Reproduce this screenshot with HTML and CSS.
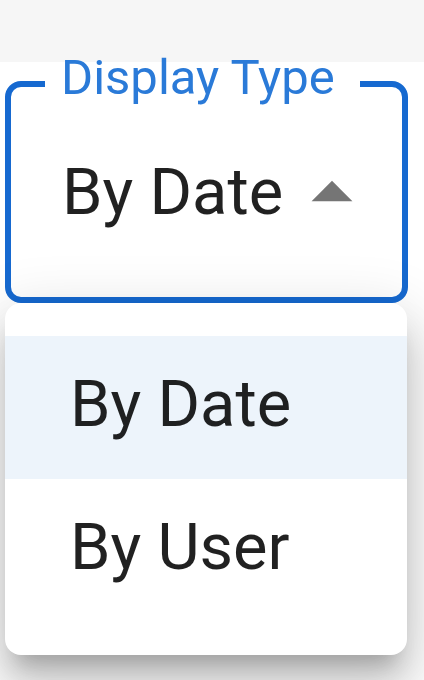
FILE: index.html
```html
<!DOCTYPE html>
<html lang="en">

<head>
    <meta charset="UTF-8">
    <meta name="viewport" content="width=device-width, initial-scale=1.0">
    <title>Display Type</title>
    <link rel="stylesheet" href="styles.css">
</head>

<body>
    <div class="page">
        <fieldset class="select-field">
            <legend class="select-label">Display Type</legend>
            <div class="select-row">
                <span class="select-value">By Date</span>
                <svg class="select-icon" viewBox="0 0 24 24" aria-hidden="true">
                    <path d="M7 14l5-5 5 5z"></path>
                </svg>
            </div>
        </fieldset>

        <ul class="menu">
            <li class="menu-item selected">By Date</li>
            <li class="menu-item">By User</li>
        </ul>
    </div>
</body>

</html>
```

FILE: styles.css
```css
* {
    padding: 0;
    margin: 0;
    box-sizing: border-box;
}

body {
    height: 100vh;
    overflow: hidden;
    font-family: 'Roboto', 'Liberation Sans', sans-serif;
    color: rgba(0, 0, 0, 0.87);
    background: linear-gradient(#f6f6f6 62px, #fff 62px);
}

.page {
    padding: 53px 16px 0 5px;
}

.select-field {
    min-inline-size: 0;
    border: 6px solid #1669d0;
    border-radius: 16px;
    padding: 30px 22px 57px 51px;
}

.select-label {
    margin-left: -17px;
    padding: 0 25px 13px 16px;
    font-size: 49px;
    line-height: 49px;
    color: #2a7ad8;
    white-space: nowrap;
}

.select-row {
    display: flex;
    justify-content: space-between;
    align-items: center;
    height: 95px;
}

.select-value {
    font-size: 65px;
    line-height: 95px;
    white-space: nowrap;
}

.select-icon {
    display: block;
    flex-shrink: 0;
    width: 98px;
    height: 98px;
    fill: rgba(0, 0, 0, 0.54);
}

.menu {
    list-style: none;
    margin-right: 1px;
    padding: 33px 0;
    background: #fff;
    border-radius: 16px;
    box-shadow: 0 20px 20px -12px rgba(0, 0, 0, 0.2),
        0 33px 41px 4px rgba(0, 0, 0, 0.14),
        0 12px 57px 8px rgba(0, 0, 0, 0.12);
}

.menu-item {
    padding: 19px 60px 25px 65px;
    font-size: 65px;
    line-height: 99px;
    white-space: nowrap;
}

.menu-item.selected {
    background: rgba(25, 118, 210, 0.08);
}
```
